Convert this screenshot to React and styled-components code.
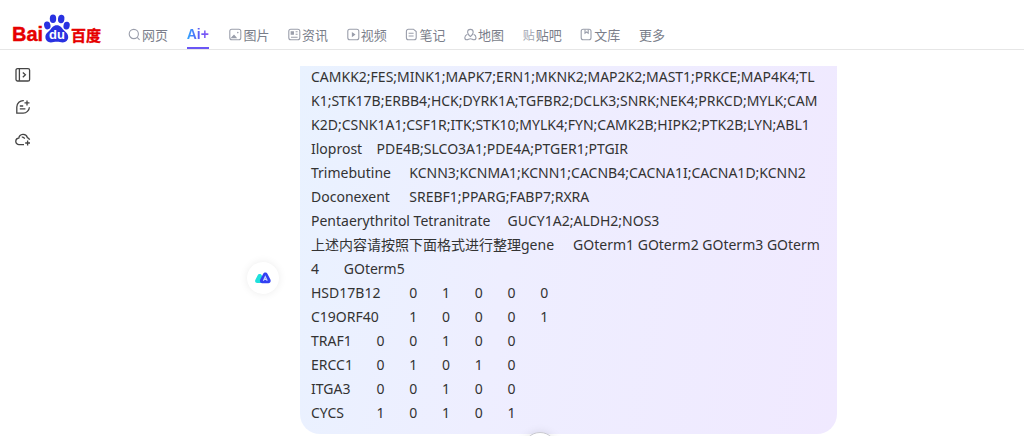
import React from "react";
import styled, { createGlobalStyle } from "styled-components";

const MESSAGE = [
  "CAMKK2;FES;MINK1;MAPK7;ERN1;MKNK2;MAP2K2;MAST1;PRKCE;MAP4K4;TL",
  "K1;STK17B;ERBB4;HCK;DYRK1A;TGFBR2;DCLK3;SNRK;NEK4;PRKCD;MYLK;CAM",
  "K2D;CSNK1A1;CSF1R;ITK;STK10;MYLK4;FYN;CAMK2B;HIPK2;PTK2B;LYN;ABL1",
  "Iloprost\tPDE4B;SLCO3A1;PDE4A;PTGER1;PTGIR",
  "Trimebutine\tKCNN3;KCNMA1;KCNN1;CACNB4;CACNA1I;CACNA1D;KCNN2",
  "Doconexent\tSREBF1;PPARG;FABP7;RXRA",
  "Pentaerythritol Tetranitrate\tGUCY1A2;ALDH2;NOS3",
  "上述内容请按照下面格式进行整理gene\tGOterm1 GOterm2 GOterm3 GOterm",
  "4\tGOterm5",
  "HSD17B12\t0\t1\t0\t0\t0",
  "C19ORF40\t1\t0\t0\t0\t1",
  "TRAF1\t0\t0\t1\t0\t0",
  "ERCC1\t0\t1\t0\t1\t0",
  "ITGA3\t0\t0\t1\t0\t0",
  "CYCS\t1\t0\t1\t0\t1",
].join("\n");

const ICONS = {
  search: (
    <>
      <circle cx="5.8" cy="6" r="4.6" />
      <path d="M9.2 9.4 11.6 11.8" />
    </>
  ),
  image: (
    <>
      <rect x="0.8" y="1.2" width="11" height="10.6" rx="2" />
      <path d="M2.8 9.6 5 7.4l2 2.200z" fill="currentColor" />
      <circle cx="8.8" cy="4.6" r="0.8" fill="currentColor" stroke="none" />
    </>
  ),
  news: (
    <>
      <rect x="0.8" y="1.2" width="11" height="10.6" rx="2" />
      <rect x="3.2" y="3.8" width="2.2" height="2.4" fill="currentColor" />
      <path d="M7.600 3.800h2M7.600 6.200h2M3 9.200h6.600" />
    </>
  ),
  video: (
    <>
      <rect x="0.8" y="1.2" width="11" height="10.6" rx="2" />
      <path d="M5.400 5v3.200L7.600 6.600z" fill="currentColor" />
    </>
  ),
  note: (
    <>
      <path d="M3.4 1.2h5l2.8 2.4v6.2a2 2 0 0 1-2 2H3.4a2 2 0 0 1-2-2V3.2a2 2 0 0 1 2-2z" />
      <path d="M3.6 5.2h5M3.6 8h5" />
    </>
  ),
  map: (
    <>
      <path d="M6.4 8.6C4.4 6.8 3.6 5.6 3.6 4.2a2.8 2.8 0 0 1 5.6 0c0 1.4-.8 2.6-2.8 4.4z" />
      <path d="M3.4 6.2C2 6.8.8 8.4.8 9.8c0 1.2.8 2 2 2 1.600 0 2-1 3.600-1s2 1 3.600 1c1.200 0 2-.8 2-2 0-1.400-1-3-2.400-3.600" />
    </>
  ),
  library: (
    <>
      <rect x="1.2" y="1.2" width="9.8" height="10.6" rx="2" />
      <path d="M5 1.4v3.8l1.6-1.2 1.6 1.2V1.4" />
    </>
  ),
};

const NAV = [
  { icon: "search", label: "网页" },
  { ai: true },
  { icon: "image", label: "图片" },
  { icon: "news", label: "资讯" },
  { icon: "video", label: "视频" },
  { icon: "note", label: "笔记" },
  { icon: "map", label: "地图" },
  { mark: "贴", label: "贴吧" },
  { icon: "library", label: "文库" },
  { label: "更多" },
];

function BaiduLogo() {
  return (
    <LogoSvg viewBox="0 0 90 30" role="img" aria-label="Bai du 百度">
      <LogoText x="-1" y="27" size={20} fill="#e60000" stroke="#e60000">
        Bai
      </LogoText>
      <g fill="#2932e1">
        <ellipse cx="34.3" cy="11.4" rx="3.2" ry="4" transform="rotate(-12 34.3 11.4)" />
        <ellipse cx="40" cy="4.8" rx="3.2" ry="4.2" />
        <ellipse cx="48.2" cy="5" rx="3.2" ry="4.2" transform="rotate(8 48.2 5)" />
        <ellipse cx="53.6" cy="11.6" rx="3.1" ry="3.9" transform="rotate(12 53.6 11.6)" />
        <path d="M43.8 11.2c3.6 0 4.8 2.6 6.8 4.8 2 2 4.6 3.6 4.6 7 0 3.2-2.4 5.4-5.4 5.4-2.2 0-3.8-.6-6-.6s-3.8.6-6 .6c-3 0-5.4-2.2-5.4-5.4 0-3.4 2.8-5 4.6-7 2-2.2 3.2-4.8 6.8-4.8z" />
      </g>
      <LogoText x="36" y="25" size={13} fill="#fff">
        du
      </LogoText>
      <LogoText x="58" y="27" size={15} fill="#e60000" stroke="#e60000">
        百度
      </LogoText>
    </LogoSvg>
  );
}

function App() {
  return (
    <>
      <GlobalStyle />
      <Page>
        <Header>
          <LogoLink href="#home">
            <BaiduLogo />
          </LogoLink>
          <Nav>
            {NAV.map((item) =>
              item.ai ? (
                <AiLink key="ai" href="#ai" aria-current="page">
                  <AiText>Ai+</AiText>
                </AiLink>
              ) : (
                <NavLink key={item.label} href={`#${item.label}`}>
                  {item.icon && (
                    <NavIcon viewBox="0 0 13 13">{ICONS[item.icon]}</NavIcon>
                  )}
                  {item.mark && <NavMark>{item.mark}</NavMark>}
                  {item.label}
                </NavLink>
              )
            )}
          </Nav>
        </Header>
        <Body>
          <SideBar>
            <SideButton type="button" aria-label="展开侧栏">
              <SideIcon viewBox="0 0 16 16">
                <rect x="1" y="1.6" width="13.6" height="12.4" rx="1.6" />
                <path d="M4.4 1.8v12M7.8 5.4l2.6 2.4-2.6 2.4" />
              </SideIcon>
            </SideButton>
            <SideButton type="button" aria-label="新对话">
              <SideIcon viewBox="0 0 16 16">
                <path d="M8.8 1.6a6.4 6.4 0 0 0-7 6.4v6.2h6.4a6.4 6.4 0 0 0 6.2-6" />
                <path d="M4.8 7h3.4M4.8 9.8h5.6M12 1.4v5M9.5 3.9h5" />
              </SideIcon>
            </SideButton>
            <SideButton type="button" aria-label="云盘">
              <SideIcon viewBox="0 0 16 16">
                <path d="M9 13.6H4.2a3.2 3.2 0 0 1-.4-6.4 4.400 4.400 0 0 1 8.600-.6 3.200 3.200 0 0 1 2.200 2.200" />
                <path d="M6.800 6.200c1.400-.2 2.400.4 2.800 1.600M12.600 9.600v4.800M10.200 12h4.800" />
              </SideIcon>
            </SideButton>
          </SideBar>
          <Main>
            <Chat>
              <Avatar>
                <AvatarSvg viewBox="0 0 16 12" aria-hidden="true">
                  <path
                    d="M2.6 3.400C3.400 1.600 6 1.600 6.800 3.400L9 7v4H2.200C.4 11-.4 9.400.4 7.800z"
                    fill="#1fe0dc"
                  />
                  <path
                    d="M8.200 1.800c.8-1.800 3.400-1.800 4.200 0l3 5.800c.8 1.800-.2 3.600-2 3.600H7.200c-1.800 0-2.800-1.800-2-3.600z"
                    fill="#3340f2"
                  />
                  <path
                    d="M8.400 8.800 10.300 4.600 12.200 8.800M9.200 7.400h2.200"
                    fill="none"
                    stroke="#c9d2ff"
                    strokeWidth="1.2"
                  />
                </AvatarSvg>
              </Avatar>
              <Bubble>{MESSAGE}</Bubble>
            </Chat>
          </Main>
        </Body>
        <ScrollButton type="button" aria-label="回到底部" />
      </Page>
    </>
  );
}

export default App;

const GlobalStyle = createGlobalStyle`
  * {
    box-sizing: border-box;
  }
  body {
    margin: 0;
    background-color: #fff;
    font-family: "Noto Sans", "Noto Sans CJK SC", sans-serif;
  }
`;

const Page = styled.div`
  display: flex;
  flex-direction: column;
  height: 100vh;
  overflow: hidden;
`;

const Header = styled.header`
  display: flex;
  align-items: flex-end;
  flex-shrink: 0;
  height: 50px;
  padding-left: 13px;
  border-bottom: 1px solid #e6e6e6;
`;

const LogoLink = styled.a`
  display: block;
  width: 90px;
  height: 30px;
  margin: 0 25px 5px 0;
`;

const LogoSvg = styled.svg`
  display: block;
  width: 90px;
  height: 30px;
  overflow: visible;
`;

const LogoText = styled.text`
  font-family: "Liberation Sans", "Noto Sans CJK SC", sans-serif;
  font-size: ${(props) => props.size}px;
  font-weight: bold;
  stroke-width: 0.4;
`;

const Nav = styled.nav`
  display: flex;
  flex: 1;
  justify-content: space-between;
  max-width: 537px;
`;

const NavLink = styled.a`
  display: flex;
  align-items: center;
  gap: 1px;
  height: 29px;
  color: #7a7e8a;
  font-family: "Noto Sans CJK SC", sans-serif;
  font-size: 13px;
  line-height: 20px;
  text-decoration: none;
`;

const NavIcon = styled.svg`
  width: 13px;
  height: 13px;
  color: #9a9eab;
  fill: none;
  stroke: currentColor;
  stroke-width: 1.1;
`;

const NavMark = styled.span`
  color: #a3a7b3;
  font-size: 12px;
`;

const AiLink = styled(NavLink)`
  margin-right: 2px;
  border-bottom: 2px solid #6a56f5;
`;

const AiText = styled.span`
  background: linear-gradient(90deg, #2fa8ff, #5b5ff5 50%, #8a54f5);
  background-clip: text;
  color: transparent;
  font-family: "Liberation Sans", sans-serif;
  font-size: 14px;
  font-weight: bold;
`;

const Body = styled.div`
  display: flex;
  flex: 1;
  min-height: 0;
`;

const SideBar = styled.aside`
  display: flex;
  flex-direction: column;
  gap: 16px;
  width: 60px;
  padding: 17px 0 0 15px;
`;

const SideButton = styled.button`
  width: 16px;
  height: 16px;
  padding: 0;
  border: none;
  background: none;
  cursor: pointer;
`;

const SideIcon = styled.svg`
  display: block;
  width: 16px;
  height: 16px;
  fill: none;
  stroke: #444;
  stroke-width: 1.3;
`;

const Main = styled.main`
  display: flex;
  flex: 1;
  justify-content: center;
  margin-top: 16px;
  overflow: hidden;
`;

const Chat = styled.div`
  display: flex;
  align-items: flex-start;
  width: 590px;
  margin-top: -1px;
  gap: 21px;
`;

const Avatar = styled.div`
  display: flex;
  align-items: center;
  justify-content: center;
  flex-shrink: 0;
  width: 32px;
  height: 32px;
  margin-top: 197px;
  border-radius: 50%;
  background-color: #fff;
  box-shadow: 0 0 8px rgba(0, 0, 0, 0.08);
`;

const AvatarSvg = styled.svg`
  width: 16px;
  height: 12px;
`;

const Bubble = styled.div`
  flex: 1;
  padding: 0 12px 9px 11px;
  border-radius: 0 0 20px 20px;
  background: linear-gradient(100deg, #e9f2ff, #eeeeff 40%, #f0e9ff);
  color: #333;
  font-size: 14px;
  line-height: 24px;
  tab-size: 9;
  white-space: pre;
`;

const ScrollButton = styled.button`
  position: fixed;
  bottom: -30px;
  left: calc(50% + 11px);
  width: 34px;
  height: 34px;
  border: 1px solid #c8c8d0;
  border-radius: 50%;
  background-color: #fff;
  box-shadow: 0 0 10px rgba(0, 0, 0, 0.1);
`;
